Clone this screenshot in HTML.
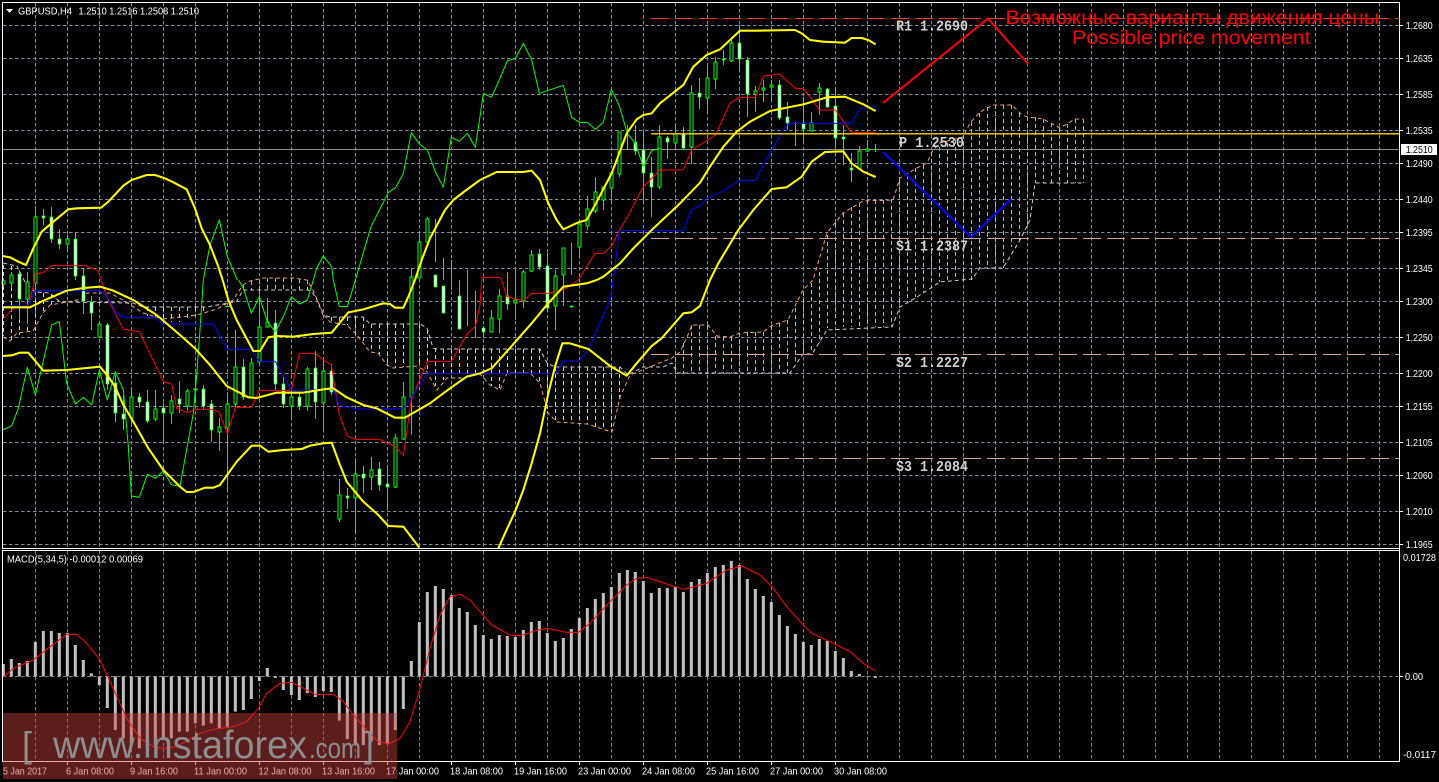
<!DOCTYPE html>
<html><head><meta charset="utf-8"><title>GBPUSD,H4</title>
<style>html,body{margin:0;padding:0;background:#000;width:1439px;height:782px;overflow:hidden}svg{display:block}
text{font-family:"Liberation Sans","Noto Sans CJK SC",sans-serif}</style></head><body>
<svg xmlns="http://www.w3.org/2000/svg" width="1439" height="782" viewBox="0 0 1439 782">
<rect width="1439" height="782" fill="#000"/>
<!-- grid top -->
<path fill="none" stroke="#7f8fa0" stroke-dasharray="3.5 2.5" d="M35.5 3V548M67.5 3V548M99.5 3V548M131.5 3V548M163.5 3V548M195.5 3V548M227.5 3V548M259.5 3V548M291.5 3V548M323.5 3V548M355.5 3V548M387.5 3V548M419.5 3V548M451.5 3V548M483.5 3V548M515.5 3V548M547.5 3V548M579.5 3V548M611.5 3V548M643.5 3V548M675.5 3V548M707.5 3V548M739.5 3V548M771.5 3V548M803.5 3V548M835.5 3V548M867.5 3V548M899.5 3V548M931.5 3V548M963.5 3V548M995.5 3V548M1027.5 3V548M1059.5 3V548M1091.5 3V548M1123.5 3V548M1155.5 3V548M1187.5 3V548M1219.5 3V548M1251.5 3V548M1283.5 3V548M1315.5 3V548M1347.5 3V548M1379.5 3V548"/>
<path fill="none" stroke="#7f8fa0" stroke-dasharray="3.5 2.5" d="M3 25.5H1399M3 58.5H1399M3 94.5H1399M3 130.5H1399M3 163.5H1399M3 199.5H1399M3 232.5H1399M3 268.5H1399M3 301.5H1399M3 337.5H1399M3 373.5H1399M3 406.5H1399M3 442.5H1399M3 475.5H1399M3 511.5H1399M3 544.5H1399"/>
<!-- grid macd -->
<path fill="none" stroke="#808080" stroke-dasharray="3.5 2.5" d="M35.5 551V761M67.5 551V761M99.5 551V761M131.5 551V761M163.5 551V761M195.5 551V761M227.5 551V761M259.5 551V761M291.5 551V761M323.5 551V761M355.5 551V761M387.5 551V761M419.5 551V761M451.5 551V761M483.5 551V761M515.5 551V761M547.5 551V761M579.5 551V761M611.5 551V761M643.5 551V761M675.5 551V761M707.5 551V761M739.5 551V761M771.5 551V761M803.5 551V761M835.5 551V761M867.5 551V761M899.5 551V761M931.5 551V761M963.5 551V761M995.5 551V761M1027.5 551V761M1059.5 551V761M1091.5 551V761M1123.5 551V761M1155.5 551V761M1187.5 551V761M1219.5 551V761M1251.5 551V761M1283.5 551V761M1315.5 551V761M1347.5 551V761M1379.5 551V761M3 676.5H1399"/>
<!-- kumo hatches -->
<path fill="none" stroke="#d8c8d8" stroke-dasharray="4 3" d="M3.5 265V336M11.5 266V340M19.5 270V335M27.5 285V333M35.5 292V331M43.5 293V313M51.5 294V305M147.5 307V316M155.5 307V318M163.5 307V322M171.5 307V322M179.5 307V322M187.5 307V320M195.5 307V316M203.5 307V312M331.5 317V322M339.5 317V325M347.5 317V325M355.5 317V335M363.5 317V341M371.5 324V352M379.5 324V354M387.5 324V365M395.5 324V368M403.5 324V367M411.5 324V366M419.5 324V366M427.5 330V372M435.5 348V386M443.5 349V380M451.5 349V378M459.5 349V378M467.5 349V376M475.5 349V375M483.5 349V377M491.5 349V386M499.5 349V390M507.5 349V373M515.5 349V373M523.5 349V373M531.5 349V377M539.5 349V382M547.5 363V413M555.5 367V422M563.5 367V423M571.5 367V423M579.5 367V424M587.5 367V424M595.5 367V427M603.5 367V429M611.5 367V431M619.5 367V400"/>
<path fill="none" stroke="#f4a460" stroke-dasharray="4 3" d="M243.5 285V290M251.5 281V290M259.5 280V290M267.5 278V290M275.5 278V290M283.5 278V290M291.5 278V290M299.5 279V290M307.5 280V290M675.5 358V373M683.5 343V373M691.5 325V373M699.5 325V373M707.5 325V373M715.5 336V373M723.5 337V373M731.5 337V373M739.5 333V373M747.5 332V373M755.5 332V373M763.5 332V373M771.5 325V373M779.5 323V373M787.5 320V373M795.5 308V363M803.5 292V353M811.5 283V353M819.5 272V343M827.5 235V328M835.5 223V328M843.5 213V327M851.5 207V327M859.5 203V327M867.5 200V327M875.5 200V327M883.5 200V327M891.5 199V327M899.5 180V307M907.5 175V302M915.5 168V297M923.5 165V292M931.5 152V288M939.5 147V282M947.5 143V280M955.5 140V280M963.5 135V280M971.5 122V280M979.5 113V268M987.5 107V268M995.5 105V268M1003.5 105V268M1011.5 105V247M1019.5 113V240M1027.5 117V225M1035.5 117V183M1043.5 119V183M1051.5 123V183M1059.5 128V183M1067.5 124V183M1075.5 119V183M1083.5 119V183"/>
<!-- kumo outlines -->
<polyline fill="none" stroke="#f4a460" stroke-dasharray="4 3" points="3,337 10,341 17,333 33,331 43,313 50,305 67,302 82,299 87,293 110,293 123,300 143,313 163,319 197,315 217,309 233,300 243,285 250,281 263,278 293,278 307,280 312,288 324,315 330,322 347,325 357,335 370,352 378,353 387,365 393,368 417,366 427,372 437,390 447,378 463,378 480,374 490,385 500,390 507,373 530,373 540,383 548,413 557,422 587,424 612,432 620,397 630,375 672,358 680,352 687,337 692,325 708,325 717,336 730,337 740,333 763,332 773,325 788,320 803,290 813,280 827,233 843,213 863,201 893,200 900,178 917,168 927,163 933,150 940,143 963,137 970,123 980,112 993,105 1012,105 1022,115 1028,117 1043,119 1060,128 1075,119 1083,119"/>
<polyline fill="none" stroke="#d8c8d8" stroke-dasharray="4 3" points="3,263 17,266 25,282 35,292 50,293 60,302 133,303 143,307 207,307 217,305 230,303 237,301 243,290 308,290 312,292 317,300 323,315 330,317 363,317 370,324 420,324 427,328 433,348 437,349 540,349 547,363 555,367 620,367 628,375 643,367 663,367 672,363 677,373 790,373 803,354 812,354 827,330 892,327 900,307 917,297 940,282 972,279 980,268 1003,268 1020,240 1030,220 1035,183 1083,183"/>
<!-- levels -->
<path fill="none" stroke="#ff3a10" stroke-dasharray="18 6" d="M651 18.5H1399"/>
<path fill="none" stroke="#d9a08e" stroke-dasharray="18 6" d="M651 238.5H1399M651 354.5H1399M651 458.5H1399"/>
<path stroke="#8c8c8c" d="M3 149.5H1399"/>
<!-- wicks -->
<path fill="none" stroke="#00ff00" d="M3.5 278V287M11.5 272V288M19.5 270V320M27.5 272V324M35.5 206V296M43.5 209V225M51.5 207V243M59.5 229V249M67.5 235V250M75.5 233V280M83.5 268V314M91.5 296V330M99.5 324V337M107.5 323V390M115.5 375V422M123.5 395V430M131.5 388V427M139.5 393V408M147.5 390V423M155.5 390V421M163.5 403V442M171.5 395V424M179.5 381V413M187.5 389V411M195.5 375V403M203.5 385V409M211.5 400V442M219.5 418V451M227.5 392V492M235.5 330V407M243.5 359V400M251.5 358V398M259.5 290V365M267.5 298V327M275.5 310V390M283.5 375V408M291.5 390V418M299.5 393V410M307.5 367V411M315.5 351V419M323.5 360V432M331.5 364V395M339.5 479V522M347.5 488V509M355.5 458V532M363.5 466V493M371.5 457V490M379.5 462V491M387.5 465V508M395.5 434V488M403.5 382V440M411.5 268V435M419.5 232V278M427.5 217V245M435.5 219V262M443.5 258V280M451.5 260V290M459.5 280V326M467.5 270V326M475.5 291V338M483.5 326V337M491.5 310V332M499.5 289V333M507.5 272V310M515.5 270V320M523.5 270V308M531.5 250V272M539.5 249V270M547.5 253V312M555.5 270V330M563.5 264V306M571.5 243V275M579.5 224V255M587.5 196V230M595.5 177V213M603.5 187V210M611.5 173V202M619.5 132V177M627.5 125V149M635.5 125V155M643.5 132V202M651.5 157V217M659.5 125V189M667.5 136V159M675.5 126V149M683.5 127V150M691.5 85V164M699.5 78V109M707.5 63V112M715.5 57V89M723.5 50V65M731.5 37V62M739.5 25V70M747.5 57V117M755.5 86V112M763.5 80V102M771.5 80V100M779.5 80V120M787.5 102V130M795.5 122V146M803.5 97V143M811.5 112V131M819.5 83V115M827.5 88V108M835.5 88V149M843.5 125V165M851.5 153V182M859.5 146V170M867.5 140V152M875.5 144V152"/>
<!-- hollow bodies -->
<path fill="#000" stroke="#00ff00" d="M2 281h3v3h-3zM10 275h3v8h-3zM26 282h3v17h-3zM34 217h3v66h-3zM66 239h3v5h-3zM98 324h3v13h-3zM130 397h3v21h-3zM154 409h3v10h-3zM170 401h3v12h-3zM186 391h3v15h-3zM218 427h3v5h-3zM226 404h3v24h-3zM234 367h3v37h-3zM250 363h3v34h-3zM258 327h3v35h-3zM266 322h3v5h-3zM290 397h3v9h-3zM306 369h3v37h-3zM322 371h3v32h-3zM338 495h3v24h-3zM354 474h3v24h-3zM370 470h3v7h-3zM394 438h3v49h-3zM402 397h3v42h-3zM410 277h3v120h-3zM418 242h3v36h-3zM426 219h3v23h-3zM490 318h3v14h-3zM498 296h3v23h-3zM514 300h3v3h-3zM522 272h3v29h-3zM530 255h3v16h-3zM554 276h3v30h-3zM562 248h3v27h-3zM578 224h3v23h-3zM586 209h3v17h-3zM594 192h3v19h-3zM602 187h3v13h-3zM610 173h3v15h-3zM618 132h3v42h-3zM658 137h3v50h-3zM674 134h3v9h-3zM690 93h3v54h-3zM706 78h3v20h-3zM714 62h3v17h-3zM730 43h3v18h-3zM754 91h3v3h-3zM762 88h3v2h-3zM770 85h3v2h-3zM810 123h3v8h-3zM818 88h3v4h-3zM858 151h3v18h-3zM866 149h3v2h-3z"/>
<!-- white bodies -->
<path fill="#fff" stroke="#00ff00" stroke-width=".7" d="M18 274h3v25h-3zM42 216h3v2h-3zM50 217h3v22h-3zM58 239h3v5h-3zM74 239h3v37h-3zM82 276h3v25h-3zM90 302h3v11h-3zM106 325h3v59h-3zM114 383h3v30h-3zM122 414h3v5h-3zM138 397h3v5h-3zM146 402h3v19h-3zM162 408h3v5h-3zM178 399h3v5h-3zM194 389h3v1h-3zM202 389h3v17h-3zM210 404h3v26h-3zM242 367h3v30h-3zM274 323h3v61h-3zM282 384h3v20h-3zM298 397h3v9h-3zM314 368h3v34h-3zM330 371h3v21h-3zM346 496h3v2h-3zM362 474h3v4h-3zM378 469h3v16h-3zM386 484h3v3h-3zM434 275h3v12h-3zM442 286h3v27h-3zM458 296h3v33h-3zM482 328h3v4h-3zM506 296h3v8h-3zM538 254h3v13h-3zM546 266h3v42h-3zM570 306h3v1h-3zM634 142h3v9h-3zM642 150h3v23h-3zM650 173h3v14h-3zM666 138h3v4h-3zM682 134h3v14h-3zM698 93h3v4h-3zM722 59h3v1h-3zM738 43h3v16h-3zM746 60h3v34h-3zM778 85h3v33h-3zM786 117h3v6h-3zM802 123h3v6h-3zM826 89h3v18h-3zM834 106h3v32h-3zM842 137h3v2h-3zM850 168h3v2h-3z"/>
<path fill="none" stroke="#00ff00" d="M193 389h5M225 306.5h5M873 149.5h5"/>
<!-- green chikou -->
<g fill="none" stroke="#00ff00" stroke-width="3" stroke-linejoin="round">
<g transform="translate(0 280) scale(.33333)">
<polyline points="8,450 35,437 55,385 82,262 106,345 155,135 178,125 200,310 226,372 250,352 275,375 298,270 322,360 346,275 370,330 385,500 394,648 418,652 442,583 466,595 490,573 515,615 540,618 580,400 590,285 600,150 610,0"/>
<polyline points="716,0 730,25 754,100 778,50 802,125 826,155 850,110 874,50 898,72 922,60 940,0"/>
<polyline points="1000,0 1018,80 1042,80 1066,0"/>
</g>
<g transform="scale(.33333)">
<polyline points="610,840 630,735 658,660 682,770 712,840"/>
<polyline points="940,840 950,805 970,768 995,800 1000,840"/>
<polyline points="1066,840 1113,680 1165,577 1187,563 1210,520 1234,398 1258,432 1282,450 1306,515 1330,562 1354,412 1378,424 1402,400 1426,442 1440,350"/>
</g>
<g transform="translate(480 0) scale(.33333)">
<polyline points="0,350 10,280 34,292 58,240 82,182 106,176 130,130 155,180 178,280 202,272 250,256 275,352 298,367 322,367 346,388 370,367 394,268 418,318 442,400 466,430 490,500 515,452 540,445"/>
</g>
</g>
<!-- red tenkan -->
<g fill="none" stroke="#ff0000" stroke-width="3" stroke-linejoin="round">
<g transform="translate(0 280) scale(.33333)">
<polyline points="8,118 40,85 85,76 105,0"/>
<polyline points="303,0 320,50 370,148 418,155 490,305 515,312 530,385 562,398 585,388 635,388 658,397 682,462 706,382 754,382 778,331 874,331 898,220 946,220 970,240 994,255 1018,405 1042,468 1066,478 1138,478 1186,500 1210,526 1234,360 1282,244 1354,244 1402,160 1426,140 1440,75"/>
</g>
<g transform="scale(.33333)"><polyline points="105,840 105,822 130,818 155,797 255,797 295,812 303,840"/></g>
<g transform="translate(480 280) scale(.33333)">
<polyline points="0,75 5,0"/>
<polyline points="65,0 80,50 130,62 155,40 205,40 250,30 295,0"/>
</g>
<g transform="translate(480 0) scale(.33333)">
<polyline points="5,840 8,832 58,832 65,840"/>
<polyline points="295,840 345,760 370,760 395,737 418,690 440,655 490,560 540,510 610,510 635,450 706,405 750,310 778,292 826,292 850,228 898,222 946,265 970,265 1018,330 1066,330 1114,397 1186,397"/>
</g>
</g>
<!-- blue kijun -->
<g fill="none" stroke="#0000ff" stroke-width="3" stroke-linejoin="round">
<g transform="translate(0 280) scale(.33333)">
<polyline points="8,78 82,78 106,32 298,32 322,50 346,95 370,112 466,112 490,132 640,132 682,208 754,208 778,245 826,245 874,331 1000,328 1018,376 1066,387 1210,387 1282,280 1440,280"/>
</g>
<g transform="translate(480 280) scale(.33333)">
<polyline points="0,280 228,280 250,243 298,243 325,210 390,60 400,0"/>
</g>
<g transform="translate(480 0) scale(.33333)">
<polyline points="400,840 418,692 610,692 635,628 660,618 682,595 730,572 778,541 826,541 874,450 920,375 940,370 1114,370 1140,325 1187,320"/>
</g>
</g>
<!-- yellow bollinger -->
<g fill="none" stroke="#ffff00" stroke-width="6.2" stroke-linejoin="round">
<g transform="scale(.33333)">
<polyline points="8,768 30,772 55,785 78,795 100,745 125,695 160,665 205,628 230,625 303,623 325,605 370,557 395,540 440,525 465,525 495,535 520,547 560,568 585,625 605,685 630,735 655,800 668,840"/>
<polyline points="1245,840 1265,780 1290,715 1335,630 1360,600 1395,573 1440,540"/>
</g>
<g transform="translate(0 280) scale(.33333)">
<polyline points="668,0 685,60 710,120 760,213 780,213 805,172 830,168 880,170 940,162 995,158 1045,97 1090,88 1150,70 1170,72 1185,83 1210,83 1225,50 1245,0"/>
<polyline points="8,228 35,226 60,218 85,218 130,272 200,270 300,260 325,290 345,320 370,375 400,425 445,505 490,570 540,620 560,636 580,636 615,623 640,623 660,615 710,545 755,497 780,497 805,515 850,510 905,507 930,497 970,490 995,488 1020,555 1040,605 1090,665 1135,705 1165,738 1210,740 1258,803"/>
<polyline points="8,82 90,82 130,62 200,32 250,24 300,20 340,32 400,60 470,105 540,165 585,205 630,255 680,318 745,352 770,354 830,338 910,338 970,328 1000,325 1040,352 1090,375 1130,385 1185,413 1215,413 1290,370 1350,325 1400,290 1440,280"/>
</g>
<g transform="translate(480 0) scale(.33333)">
<polyline points="0,540 50,516 130,516 155,512 180,540 205,610 230,660 250,688 295,667 320,660 345,615 395,520 440,400 470,358 490,345 515,340 540,310 610,255 640,200 680,165 720,148 750,120 780,92 830,92 945,90 965,100 990,120 1030,125 1095,128 1115,114 1145,114 1165,120 1187,133"/>
<polyline points="350,840 370,830 420,790 460,745 515,690 600,610 660,548 690,500 730,440 770,395 810,365 870,333 900,327 970,313 1040,292 1095,290 1150,313 1187,333"/>
<polyline points="690,840 715,790 775,690 820,630 875,567 920,562 965,530 995,485 1035,456 1090,454 1115,490 1150,515 1187,531"/>
</g>
<g transform="translate(480 280) scale(.33333)">
<polyline points="0,280 35,265 80,215 155,130 200,75 250,20 320,10 350,0"/>
<polyline points="55,805 75,760 105,695 130,630 155,550 180,460 205,340 225,260 247,190 270,190 325,207 390,258 440,287 470,250 515,198 545,175 610,100 635,97 660,78 690,0"/>
</g>
</g>
<!-- P level on top -->
<path stroke="#ffd700" stroke-width="1.4" d="M651 133.8H1399"/>
<!-- forecast -->
<polyline fill="none" stroke="#ff0000" stroke-width="2" points="883,103 988,18.5 1028,64"/>
<polyline fill="none" stroke="#0000ff" stroke-width="2" points="883,152 971,237 1011,199"/>
<!-- level labels -->
<g font-size="14.5" font-weight="bold" fill="#cfcfcf" style="font-family:'Liberation Mono',monospace">
<text x="896" y="30.5" textLength="72" lengthAdjust="spacingAndGlyphs" style="font-family:'Liberation Mono',monospace">R1 1.2690</text>
<text x="899" y="147" textLength="65" lengthAdjust="spacingAndGlyphs" style="font-family:'Liberation Mono',monospace">P 1.2530</text>
<text x="896" y="250.5" textLength="72" lengthAdjust="spacingAndGlyphs" style="font-family:'Liberation Mono',monospace">S1 1.2387</text>
<text x="896" y="367" textLength="72" lengthAdjust="spacingAndGlyphs" style="font-family:'Liberation Mono',monospace">S2 1.2227</text>
<text x="896" y="471" textLength="72" lengthAdjust="spacingAndGlyphs" style="font-family:'Liberation Mono',monospace">S3 1.2084</text>
</g>
<text x="1005.5" y="24" font-size="19.5" fill="#ff0000" textLength="373.5" lengthAdjust="spacingAndGlyphs">Возможные варианты движения цены</text>
<text x="1072" y="44" font-size="19.5" fill="#ff0000" textLength="238.5" lengthAdjust="spacingAndGlyphs">Possible price movement</text>
<!-- MACD hist -->
<g transform="translate(0 545) scale(.33333)"><path fill="none" stroke="#c0c0c0" stroke-width="9" d="M10 394V357M34 394V342M58 394V354M82 394V348M106 394V291M130 394V258M154 394V258M178 394V264M202 394V264M226 394V300M250 394V345M274 394V385M298 394V420M322 394V489M346 394V555M370 394V580M394 394V600M418 394V610M442 394V605M466 394V600M490 394V585M514 394V580M538 394V560M562 394V560M586 394V535M610 394V542M634 394V535M658 394V550M682 394V545M706 394V500M730 394V495M754 394V462M778 394V408M802 394V369M826 394V399M850 394V435M874 394V450M898 394V465M922 394V444M946 394V456M970 394V438M994 394V441M1018 394V527M1042 394V582M1066 394V595M1090 394V600M1114 394V590M1138 394V600M1162 394V595M1186 394V555M1210 394V492M1234 394V348M1258 394V231M1282 394V141M1306 394V123M1330 394V132M1354 394V150M1378 394V189M1402 394V201M1426 394V240"/></g>
<g transform="translate(480 545) scale(.33333)"><path fill="none" stroke="#c0c0c0" stroke-width="9" d="M10 394V270M34 394V282M58 394V270M82 394V273M106 394V276M130 394V255M154 394V231M178 394V228M202 394V264M226 394V288M250 394V279M274 394V252M298 394V219M322 394V189M346 394V162M370 394V144M394 394V126M418 394V84M442 394V75M466 394V81M490 394V108M514 394V144M538 394V129M562 394V129M586 394V126M610 394V141M634 394V111M658 394V102M682 394V84M706 394V66M730 394V60M754 394V48M778 394V60M802 394V102M826 394V132M850 394V153M874 394V171M898 394V210M922 394V243M946 394V267M970 394V291M994 394V300M1018 394V282M1042 394V288M1066 394V318M1090 394V339M1114 394V378M1138 394V387M1162 394V393M1186 394V399"/></g>
<g fill="none" stroke="#ff0000" stroke-width="3" stroke-linejoin="round">
<g transform="translate(0 545) scale(.33333)"><polyline points="8,398 40,370 100,345 140,313 200,268 230,268 260,295 300,345 335,420 380,520 420,580 460,605 490,610 530,605 600,565 640,553 700,545 740,530 775,490 800,445 840,415 875,412 910,430 945,448 1000,448 1030,470 1060,510 1100,555 1135,590 1165,597 1200,580 1230,530 1260,430 1290,310 1320,210 1350,155 1380,148 1410,165 1440,200"/></g>
<g transform="translate(480 545) scale(.33333)"><polyline points="0,200 35,240 90,270 120,272 170,256 200,250 260,262 295,262 330,235 390,170 440,120 470,100 500,97 560,117 610,133 680,115 740,75 785,63 840,90 880,130 920,185 970,240 995,265 1060,295 1110,320 1150,355 1187,378"/></g>
</g>
<!-- frames -->
<path fill="none" stroke="#fff" d="M2.5 2.5H1399.5V761.5H2.5V550.5H1399.5M2.5 2.5V548.5H1399.5"/>
<path fill="none" stroke="#fff" d="M1400 25.5h3M1400 58.5h3M1400 94.5h3M1400 130.5h3M1400 163.5h3M1400 199.5h3M1400 232.5h3M1400 268.5h3M1400 301.5h3M1400 337.5h3M1400 373.5h3M1400 406.5h3M1400 442.5h3M1400 475.5h3M1400 511.5h3M1400 544.5h3M1400 676.5h3M67.5 761v4M131.5 761v4M195.5 761v4M259.5 761v4M323.5 761v4M387.5 761v4M451.5 761v4M515.5 761v4M579.5 761v4M643.5 761v4M707.5 761v4M771.5 761v4M835.5 761v4"/>
<!-- header -->
<path fill="#fff" d="M6 9h7l-3.5 4z"/>
<g font-size="10.5" fill="#fff">
<text x="18" y="14.5" textLength="54" lengthAdjust="spacingAndGlyphs">GBPUSD,H4</text>
<text x="78.5" y="14.5" textLength="120.5" lengthAdjust="spacingAndGlyphs">1.2510 1.2516 1.2508 1.2510</text>
<text x="7" y="562.5" textLength="136" lengthAdjust="spacingAndGlyphs">MACD(5,34,5) -0.00012 0.00069</text>
<!-- price axis -->
<text x="1405.7" y="29" textLength="27" lengthAdjust="spacingAndGlyphs">1.2680</text>
<text x="1405.7" y="62" textLength="27" lengthAdjust="spacingAndGlyphs">1.2635</text>
<text x="1405.7" y="98" textLength="27" lengthAdjust="spacingAndGlyphs">1.2585</text>
<text x="1405.7" y="134" textLength="27" lengthAdjust="spacingAndGlyphs">1.2535</text>
<text x="1405.7" y="167" textLength="27" lengthAdjust="spacingAndGlyphs">1.2490</text>
<text x="1405.7" y="203" textLength="27" lengthAdjust="spacingAndGlyphs">1.2440</text>
<text x="1405.7" y="236" textLength="27" lengthAdjust="spacingAndGlyphs">1.2395</text>
<text x="1405.7" y="272" textLength="27" lengthAdjust="spacingAndGlyphs">1.2345</text>
<text x="1405.7" y="305" textLength="27" lengthAdjust="spacingAndGlyphs">1.2300</text>
<text x="1405.7" y="341" textLength="27" lengthAdjust="spacingAndGlyphs">1.2250</text>
<text x="1405.7" y="377" textLength="27" lengthAdjust="spacingAndGlyphs">1.2200</text>
<text x="1405.7" y="410" textLength="27" lengthAdjust="spacingAndGlyphs">1.2155</text>
<text x="1405.7" y="446" textLength="27" lengthAdjust="spacingAndGlyphs">1.2105</text>
<text x="1405.7" y="479" textLength="27" lengthAdjust="spacingAndGlyphs">1.2060</text>
<text x="1405.7" y="515" textLength="27" lengthAdjust="spacingAndGlyphs">1.2010</text>
<text x="1405.7" y="548" textLength="27" lengthAdjust="spacingAndGlyphs">1.1965</text>
<text x="1403" y="561" textLength="33" lengthAdjust="spacingAndGlyphs">0.01728</text>
<text x="1405" y="680" textLength="18" lengthAdjust="spacingAndGlyphs">0.00</text>
<text x="1403" y="758" textLength="33" lengthAdjust="spacingAndGlyphs">-0.0117</text>
<!-- time axis -->
<text x="3" y="774.5" textLength="44" lengthAdjust="spacingAndGlyphs">5 Jan 2017</text>
<text x="66" y="774.5" textLength="48" lengthAdjust="spacingAndGlyphs">6 Jan 08:00</text>
<text x="130" y="774.5" textLength="48" lengthAdjust="spacingAndGlyphs">9 Jan 16:00</text>
<text x="194" y="774.5" textLength="53" lengthAdjust="spacingAndGlyphs">11 Jan 00:00</text>
<text x="258.5" y="774.5" textLength="53" lengthAdjust="spacingAndGlyphs">12 Jan 08:00</text>
<text x="322" y="774.5" textLength="53" lengthAdjust="spacingAndGlyphs">13 Jan 16:00</text>
<text x="386" y="774.5" textLength="53" lengthAdjust="spacingAndGlyphs">17 Jan 00:00</text>
<text x="450" y="774.5" textLength="53" lengthAdjust="spacingAndGlyphs">18 Jan 08:00</text>
<text x="514" y="774.5" textLength="53" lengthAdjust="spacingAndGlyphs">19 Jan 16:00</text>
<text x="578" y="774.5" textLength="53" lengthAdjust="spacingAndGlyphs">23 Jan 00:00</text>
<text x="642" y="774.5" textLength="53" lengthAdjust="spacingAndGlyphs">24 Jan 08:00</text>
<text x="706" y="774.5" textLength="53" lengthAdjust="spacingAndGlyphs">25 Jan 16:00</text>
<text x="770" y="774.5" textLength="53" lengthAdjust="spacingAndGlyphs">27 Jan 00:00</text>
<text x="834" y="774.5" textLength="53" lengthAdjust="spacingAndGlyphs">30 Jan 08:00</text>
</g>
<!-- current price box -->
<rect x="1401" y="144" width="36" height="11" fill="#fff"/>
<text x="1405.7" y="153" font-size="10.5" fill="#000" textLength="27" lengthAdjust="spacingAndGlyphs">1.2510</text>
<!-- watermark -->
<rect x="3" y="713" width="394" height="66" fill="rgb(209,66,66)" fill-opacity=".44"/>
<g fill="#8e8e8e">
<text x="22" y="757" font-size="36">[</text>
<text x="53" y="758" font-size="38.5" textLength="254" lengthAdjust="spacingAndGlyphs">www.instaforex</text>
<text x="309" y="758" font-size="29" textLength="52" lengthAdjust="spacingAndGlyphs">.com</text>
<text x="364" y="757" font-size="36">]</text>
</g>
</svg>
</body></html>
